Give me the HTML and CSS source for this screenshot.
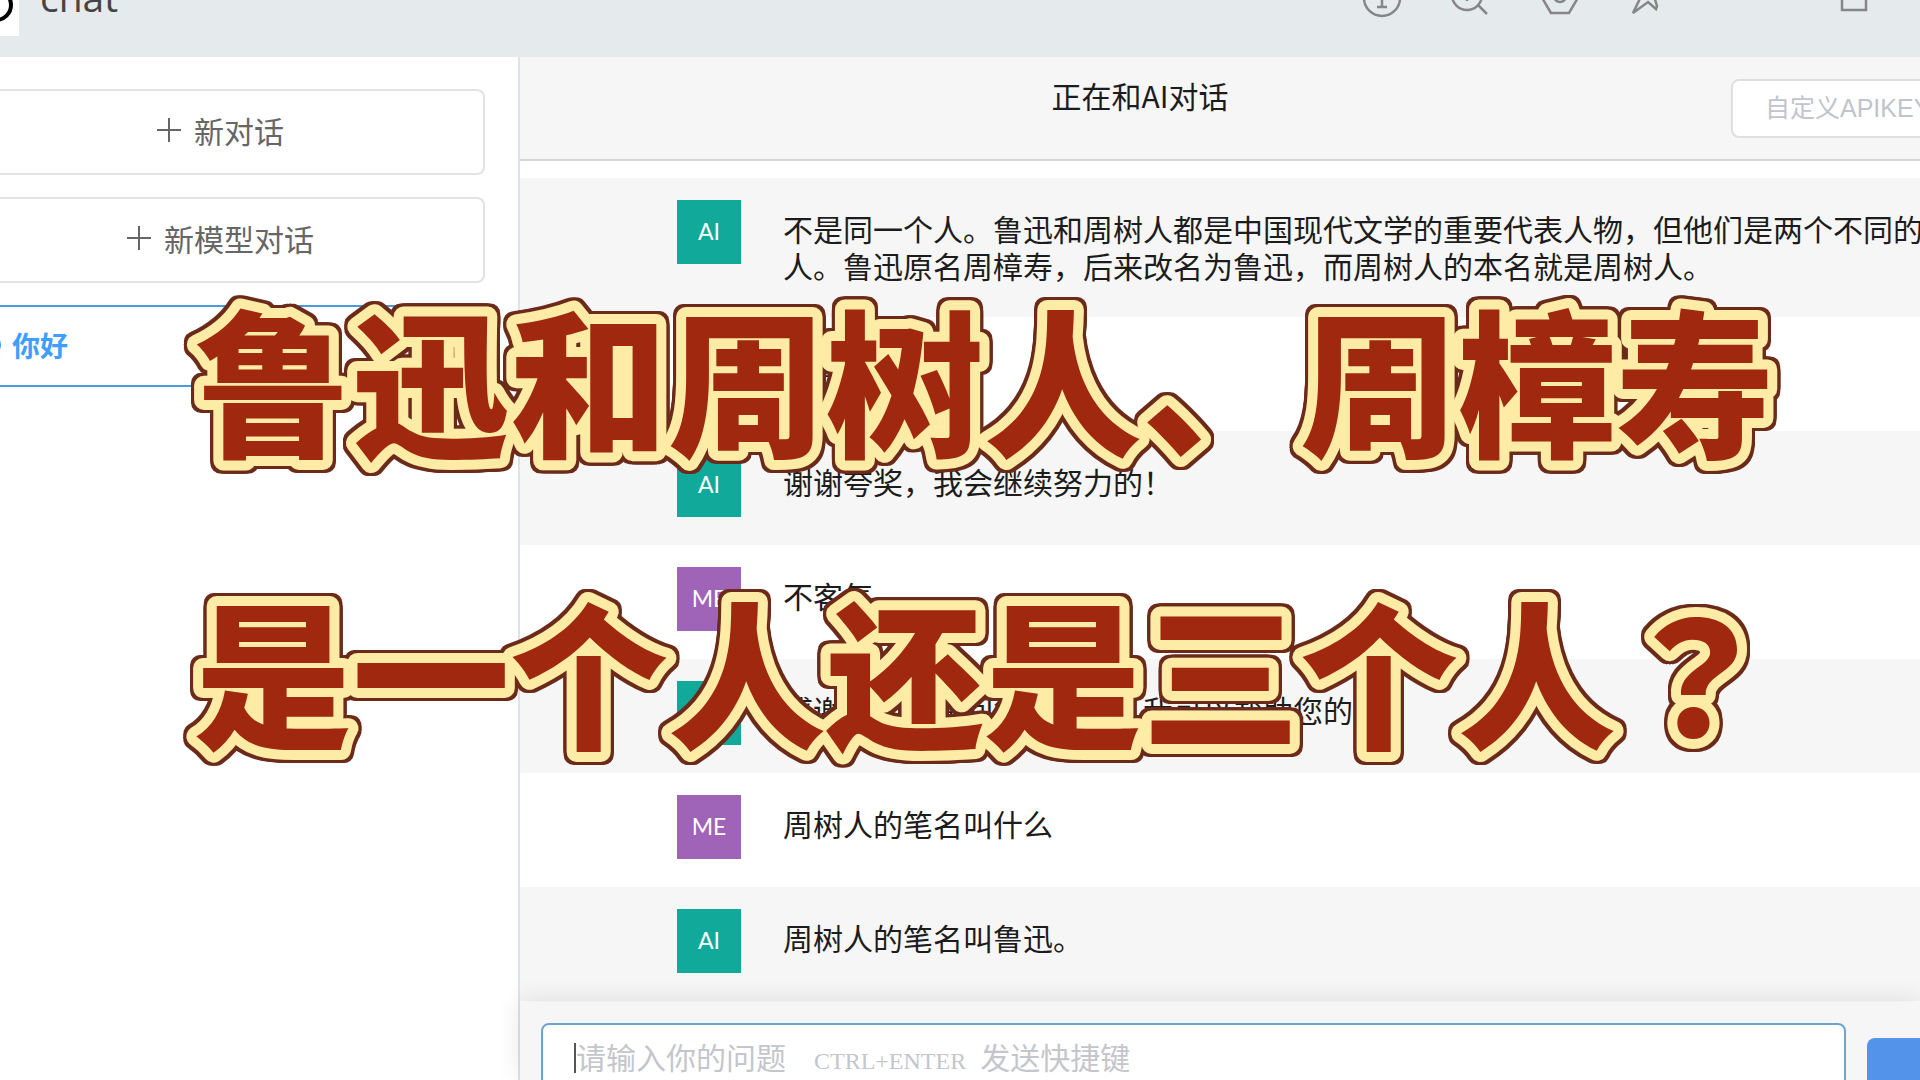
FILE: index.html
```html
<!DOCTYPE html>
<html lang="zh-CN">
<head>
<meta charset="utf-8">
<title>chat</title>
<link rel="stylesheet" href="styles.css">
</head>
<body>
<div class="app">
  <header class="titlebar">
    <div class="brand">
      <svg class="logo" viewBox="0 0 19 36" aria-hidden="true"><rect width="19" height="36" fill="#fff"/><circle cx="-4" cy="5" r="15" fill="none" stroke="#000" stroke-width="4"/></svg>
      <span class="brand-name">chat</span>
    </div>
    <div class="tools">
      <svg class="tool" viewBox="0 0 40 40"><circle cx="20" cy="20" r="18"/><path d="M16 17h4v12M15 29h10M19 10h3"/></svg>
      <svg class="tool" viewBox="0 0 40 40"><circle cx="16" cy="17" r="15"/><path d="M27 27l9 9M9 16h14M16 9v14"/></svg>
      <svg class="tool" viewBox="0 0 40 40"><path d="M11 35L1 18 10 1h20l9 17-10 17z"/><circle cx="20" cy="18" r="6"/></svg>
      <svg class="tool" viewBox="0 0 40 40"><path d="M4 35L20 2l8 26-1 3-8-7z"/></svg>
      <svg class="tool tool-window" viewBox="0 0 40 40"><path d="M8 8h24v24H8z"/></svg>
    </div>
  </header>
  <div class="workspace">
    <aside class="sidebar">
      <button class="new-chat" type="button"><svg class="plus" viewBox="0 0 24 24"><path d="M12 0v24M0 12h24"/></svg>新对话</button>
      <button class="new-chat" type="button"><svg class="plus" viewBox="0 0 24 24"><path d="M12 0v24M0 12h24"/></svg>新模型对话</button>
      <button class="session" type="button"><svg class="bubble" viewBox="0 0 24 24"><circle cx="12" cy="12" r="10"/></svg>你好</button>
    </aside>
    <main class="chat">
      <div class="chat-head">
        <h2 class="chat-title">正在和AI对话</h2>
        <input class="apikey" type="text" placeholder="自定义APIKEY" aria-label="自定义APIKEY">
      </div>
      <div class="messages">
        <div class="row ai"><span class="avatar">AI</span><p class="text">不是同一个人。鲁迅和周树人都是中国现代文学的重要代表人物，但他们是两个不同的<br>人。鲁迅原名周樟寿，后来改名为鲁迅，而周树人的本名就是周树人。</p></div>
        <div class="row me"><span class="avatar">ME</span><p class="text">你真棒</p></div>
        <div class="row ai"><span class="avatar">AI</span><p class="text">谢谢夸奖，我会继续努力的！</p></div>
        <div class="row me"><span class="avatar">ME</span><p class="text">不客气</p></div>
        <div class="row ai"><span class="avatar">AI</span><p class="text">感谢您的礼貌回复，有什么我可以帮助您的吗</p></div>
        <div class="row me"><span class="avatar">ME</span><p class="text">周树人的笔名叫什么</p></div>
        <div class="row ai"><span class="avatar">AI</span><p class="text">周树人的笔名叫鲁迅。</p></div>
      </div>
      <form class="composer">
        <div class="field">
          <textarea class="question" id="question"></textarea>
          <label class="hint" for="question">请输入你的问题<span class="keys">CTRL+ENTER</span>发送快捷键</label>
        </div>
        <button class="send" type="button" aria-label="发送"><svg viewBox="0 0 40 40"><path d="M4 18L38 4 30 36 20 28z"/></svg></button>
      </form>
    </main>
  </div>
  <h1 class="caption">
    <svg class="caption-art" viewBox="0 0 1640 560">
      <text x="24" y="175">鲁迅和周树人、周樟寿</text>
      <text x="24" y="467">是一个人还是三个人<tspan class="centred-mark" lang="zh-TW">？</tspan></text>
    </svg>
  </h1>
</div>
</body>
</html>
```
FILE: styles.css
```css
* { box-sizing: border-box; }
body {
  margin: 0;
  font-family: "Noto Sans CJK SC", sans-serif;
  background: #fff;
  color: #1c1c1c;
}
button, input, textarea { font-family: inherit; }
.app {
  position: relative;
  height: 100vh;
  overflow: hidden;
  display: flex;
  flex-direction: column;
}
.titlebar {
  display: flex;
  justify-content: space-between;
  align-items: flex-start;
  flex: 0 0 57px;
  background: #e5eaec;
}
.brand { display: flex; gap: 21px; }
.logo { width: 19px; height: 36px; }
.brand-name {
  margin-top: -26px;
  font-family: "Open Sans", sans-serif;
  font-size: 39px;
  line-height: 46px;
  color: #444;
}
.tools { display: flex; gap: 49px; margin: -22px 46px 0 0; }
.tool {
  width: 40px;
  height: 40px;
  fill: none;
  stroke: #868686;
  stroke-width: 2.5;
}
.tool-window { margin-left: 116px; }
.workspace { flex: 1; display: flex; min-height: 0; }
.sidebar {
  flex: 0 0 520px;
  display: flex;
  flex-direction: column;
  gap: 22px;
  padding: 32px 33px 0 0;
  border-right: 2px solid #dfe3e6;
}
.new-chat, .session {
  display: flex;
  align-items: center;
  background: #fff;
  border: 2px solid #e2e2e2;
  border-left: 0;
  border-radius: 0 8px 8px 0;
  color: #666;
  font-size: 30px;
}
.new-chat { height: 86px; justify-content: center; gap: 13px; padding: 0 42px 4px 0; }
.plus { width: 24px; height: 24px; stroke: #666; stroke-width: 2; }
.session {
  height: 82px;
  gap: 10px;
  padding: 0 0 2px;
  border-color: #4a9be0;
  color: #409eff;
  font-size: 28px;
  font-weight: 700;
}
.bubble { width: 24px; height: 24px; margin-left: -22px; fill: none; stroke: #409eff; stroke-width: 2; }
.chat { flex: 1; min-width: 0; display: flex; flex-direction: column; }
.chat-head {
  position: relative;
  flex: 0 0 104px;
  padding-top: 16px;
  background: #f6f6f6;
  border-bottom: 2px solid #d4d6d8;
}
.chat-title {
  margin: 0 160px 0 0;
  text-align: center;
  font-size: 30px;
  font-weight: 400;
  line-height: 44px;
}
.apikey {
  position: absolute;
  top: 22px;
  right: -62px;
  width: 251px;
  height: 59px;
  padding: 0 32px;
  border: 2px solid #dedfe1;
  border-radius: 8px;
  font-family: "Liberation Sans", "Noto Sans CJK SC", sans-serif;
  font-size: 25px;
}
.apikey::placeholder { color: #c0c4cc; opacity: 1; }
.messages { flex: 1; padding-top: 17px; min-height: 0; }
.row { display: flex; gap: 42px; padding: 22px 0 28px 157px; }
.row.ai { background: #f6f6f6; }
.avatar {
  flex: 0 0 64px;
  height: 64px;
  text-align: center;
  font: 23px/62px Lato, sans-serif;
  color: #fff;
}
.ai .avatar { background: #10a99a; }
.me .avatar { background: #9f64b8; }
.text {
  margin: 10px 0 5px;
  font-size: 30px;
  line-height: 37px;
  white-space: nowrap;
}
.composer {
  flex: 0 0 78px;
  min-height: 0;
  display: flex;
  gap: 21px;
  padding: 21px 0 0 21px;
  background: #f6f6f6;
  box-shadow: 0 -2px 24px rgba(0, 0, 0, .1);
}
.field { position: relative; flex: 1; height: 90px; }
.question {
  display: block;
  width: 100%;
  height: 100%;
  padding: 13px 32px;
  border: 2px solid #6aa5cf;
  border-radius: 8px;
  outline: 0;
  resize: none;
  overflow: hidden;
  font-size: 30px;
}
.hint {
  position: absolute;
  top: 20px;
  left: 33px;
  height: 30px;
  border-left: 2px solid #555;
  font-size: 30px;
  line-height: 26px;
  color: #c4c6cc;
  pointer-events: none;
}
.keys {
  margin: 0 14px 0 28px;
  font-family: "Liberation Serif", serif;
  font-size: 24px;
}
.send {
  flex: 0 0 53px;
  height: 90px;
  margin-top: 15px;
  padding: 20px 0 0 42px;
  border: 0;
  border-radius: 8px 0 0 0;
  background: #5493ea;
  overflow: hidden;
}
.send svg { width: 40px; height: 40px; fill: #fff; }
.caption {
  position: absolute;
  top: 270px;
  left: 170px;
  margin: 0;
  pointer-events: none;
}
.caption-art {
  display: block;
  width: 1640px;
  height: 560px;
  font-size: 158px;
  font-weight: 900;
  fill: #a0280e;
  stroke: #feeca6;
  stroke-width: 20px;
  stroke-linejoin: round;
  paint-order: stroke fill;
  filter: drop-shadow(3px 0 #6b2a1a) drop-shadow(-3px 0 #6b2a1a) drop-shadow(0 3px #6b2a1a) drop-shadow(0 -3px #6b2a1a);
}
.centred-mark { font-family: "Noto Sans CJK TC", sans-serif; }
```
